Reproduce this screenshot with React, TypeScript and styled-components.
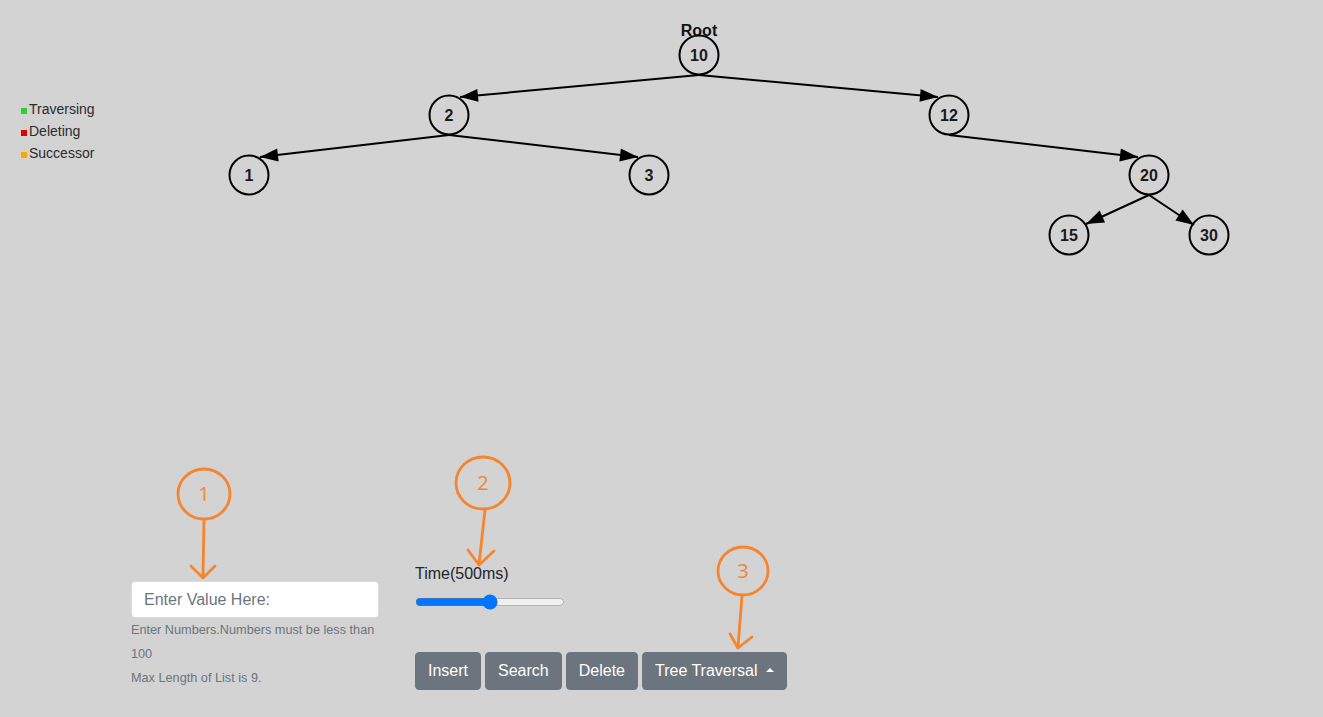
import React from "react";
import styled, { createGlobalStyle } from "styled-components";

const GlobalStyle = createGlobalStyle`
  html, body { margin: 0; padding: 0; background: #d3d3d3; }
  body { font-family: "Liberation Sans", Arial, sans-serif; }
  * { box-sizing: border-box; }
`;

const Page = styled.div`
  position: relative;
  width: 100%;
  height: 717px;
  background: #d3d3d3;
  display: flex;
  flex-direction: column;
  overflow: hidden;
`;

const Stage = styled.div`
  position: relative;
  flex: 0 0 562px;
  padding: 98px 0 0 21px;
`;

const TreeSvg = styled.svg`
  position: absolute;
  left: 0;
  top: 0;
  width: 1323px;
  height: 562px;
`;

const Legend = styled.ul`
  position: relative;
  z-index: 1;
  list-style: none;
  margin: 0;
  padding: 0;
  font-size: 14px;
  line-height: 22px;
  color: #2b2b2b;
`;

const LegendItem = styled.li`
  display: flex;
  align-items: baseline;
`;

const Swatch = styled.span<{ $color: string }>`
  display: inline-block;
  width: 6px;
  height: 6px;
  margin-right: 2px;
  background: ${(p) => p.$color};
`;

const Controls = styled.div`
  display: flex;
  align-items: flex-end;
  padding-left: 131px;
  gap: 36px;
`;

const InputGroup = styled.div`
  width: 248px;
  display: flex;
  flex-direction: column;
`;

const ValueInput = styled.input`
  width: 100%;
  height: 37px;
  padding: 6px 12px;
  font-family: "Liberation Sans", Arial, sans-serif;
  font-size: 16px;
  color: #495057;
  background: #fff;
  border: 1px solid #d8dde2;
  border-radius: 4px;
  outline: none;
  &::placeholder { color: #6c757d; }
`;

const HelpText = styled.small`
  display: block;
  font-size: 12.7px;
  line-height: 24px;
  color: #6c757d;
`;

const ActionColumn = styled.div`
  display: flex;
  flex-direction: column;
`;

const TimeLabel = styled.label`
  font-size: 16px;
  line-height: 24px;
  color: #212529;
`;

const Slider = styled.input`
  width: 150px;
  height: 16px;
  margin: 8px 0 0 0;
`;

const ButtonRow = styled.div`
  display: flex;
  gap: 4px;
  margin-top: 42px;
`;

const Button = styled.button`
  height: 38px;
  padding: 6px 12px;
  font-family: "Liberation Sans", Arial, sans-serif;
  font-size: 16px;
  line-height: 24px;
  color: #fff;
  background: #6c757d;
  border: 1px solid #6c757d;
  border-radius: 4px;
  display: inline-flex;
  align-items: center;
  cursor: pointer;
`;

const Caret = styled.span`
  display: inline-block;
  margin-left: 8px;
  width: 0;
  height: 0;
  border-left: 4.8px solid transparent;
  border-right: 4.8px solid transparent;
  border-bottom: 4.8px solid #fff;
  margin-bottom: 3px;
`;

const Annotations = styled.svg`
  position: absolute;
  left: 0;
  top: 0;
  width: 1323px;
  height: 717px;
  pointer-events: none;
`;

type Node = { id: string; x: number; y: number };
const nodes: Node[] = [
  { id: "10", x: 699, y: 55 },
  { id: "2", x: 449, y: 115 },
  { id: "12", x: 949, y: 115 },
  { id: "1", x: 249, y: 175 },
  { id: "3", x: 649, y: 175 },
  { id: "20", x: 1149, y: 175 },
  { id: "15", x: 1069, y: 235 },
  { id: "30", x: 1209, y: 235 },
];

type Edge = { sx: number; sy: number; tx: number; ty: number };
const edges: Edge[] = [
  { sx: 699, sy: 75, tx: 460, ty: 97 },
  { sx: 699, sy: 75, tx: 938, ty: 97 },
  { sx: 449, sy: 135, tx: 260, ty: 157 },
  { sx: 449, sy: 135, tx: 638, ty: 157 },
  { sx: 949, sy: 135, tx: 1138, ty: 157 },
  { sx: 1149, sy: 195, tx: 1086, ty: 224 },
  { sx: 1149, sy: 195, tx: 1194, ty: 225 },
];

function arrowHead(e: Edge, L = 18, w = 6.5) {
  const dx = e.tx - e.sx;
  const dy = e.ty - e.sy;
  const len = Math.hypot(dx, dy);
  const ux = dx / len;
  const uy = dy / len;
  const bx = e.tx - ux * L;
  const by = e.ty - uy * L;
  const nx = -uy;
  const ny = ux;
  return `${e.tx},${e.ty} ${bx + nx * w},${by + ny * w} ${bx - nx * w},${by - ny * w}`;
}

const ORANGE = "#f5852f";

function Callout({ cx, cy, r, label, line, head }: { cx: number; cy: number; r: number; label: string; line: [number, number, number, number]; head: [number, number, number, number, number, number] }) {
  return (
    <g stroke={ORANGE} strokeWidth={2.8} fill="none" strokeLinecap="round" strokeLinejoin="round">
      <ellipse cx={cx} cy={cy} rx={r} ry={r - 1} />
      <line x1={line[0]} y1={line[1]} x2={line[2]} y2={line[3]} />
      <polyline points={`${head[0]},${head[1]} ${head[2]},${head[3]} ${head[4]},${head[5]}`} />
      <text x={cx} y={cy + 7} textAnchor="middle" fill={ORANGE} stroke="none" fontSize="20" fontFamily="'Open Sans', sans-serif">
        {label}
      </text>
    </g>
  );
}

export default function App() {
  return (
    <Page>
      <GlobalStyle />
      <Stage>
        <TreeSvg viewBox="0 0 1323 562">
          <text x={699} y={36} textAnchor="middle" fontSize="16" fontWeight="bold" fill="#111" fontFamily="'Liberation Sans', Arial, sans-serif">
            Root
          </text>
          {edges.map((e, i) => (
            <g key={i}>
              <line x1={e.sx} y1={e.sy} x2={e.tx} y2={e.ty} stroke="#000" strokeWidth={2} />
              <polygon points={arrowHead(e)} fill="#000" />
            </g>
          ))}
          {nodes.map((n) => (
            <g key={n.id}>
              <circle cx={n.x} cy={n.y} r={19.5} fill="none" stroke="#000" strokeWidth={2} />
              <text x={n.x} y={n.y + 6} textAnchor="middle" fontSize="16" fontWeight="bold" fill="#1a1a1a" fontFamily="'Liberation Sans', Arial, sans-serif">
                {n.id}
              </text>
            </g>
          ))}
        </TreeSvg>
        <Legend>
          <LegendItem><Swatch $color="#32cd32" />Traversing</LegendItem>
          <LegendItem><Swatch $color="#e00000" />Deleting</LegendItem>
          <LegendItem><Swatch $color="#ffa500" />Successor</LegendItem>
        </Legend>
      </Stage>
      <Controls>
        <InputGroup>
          <ValueInput type="text" placeholder="Enter Value Here:" />
          <HelpText>
            Enter Numbers.Numbers must be less than 100
            <br />
            Max Length of List is 9.
          </HelpText>
        </InputGroup>
        <ActionColumn>
          <TimeLabel>Time(500ms)</TimeLabel>
          <Slider type="range" min={0} max={1000} defaultValue={500} />
          <ButtonRow>
            <Button>Insert</Button>
            <Button>Search</Button>
            <Button>Delete</Button>
            <Button>
              Tree Traversal
              <Caret />
            </Button>
          </ButtonRow>
        </ActionColumn>
      </Controls>
      <Annotations viewBox="0 0 1323 717">
        <Callout cx={204} cy={494} r={26} label="1" line={[204, 520, 203, 577]} head={[191, 566, 203, 578, 215, 566]} />
        <Callout cx={483} cy={483} r={27} label="2" line={[485, 510, 479, 564]} head={[468, 550, 479, 565, 494, 551]} />
        <Callout cx={743} cy={571} r={25} label="3" line={[742, 596, 738, 647]} head={[730, 634, 738, 648, 752, 637]} />
      </Annotations>
    </Page>
  );
}
